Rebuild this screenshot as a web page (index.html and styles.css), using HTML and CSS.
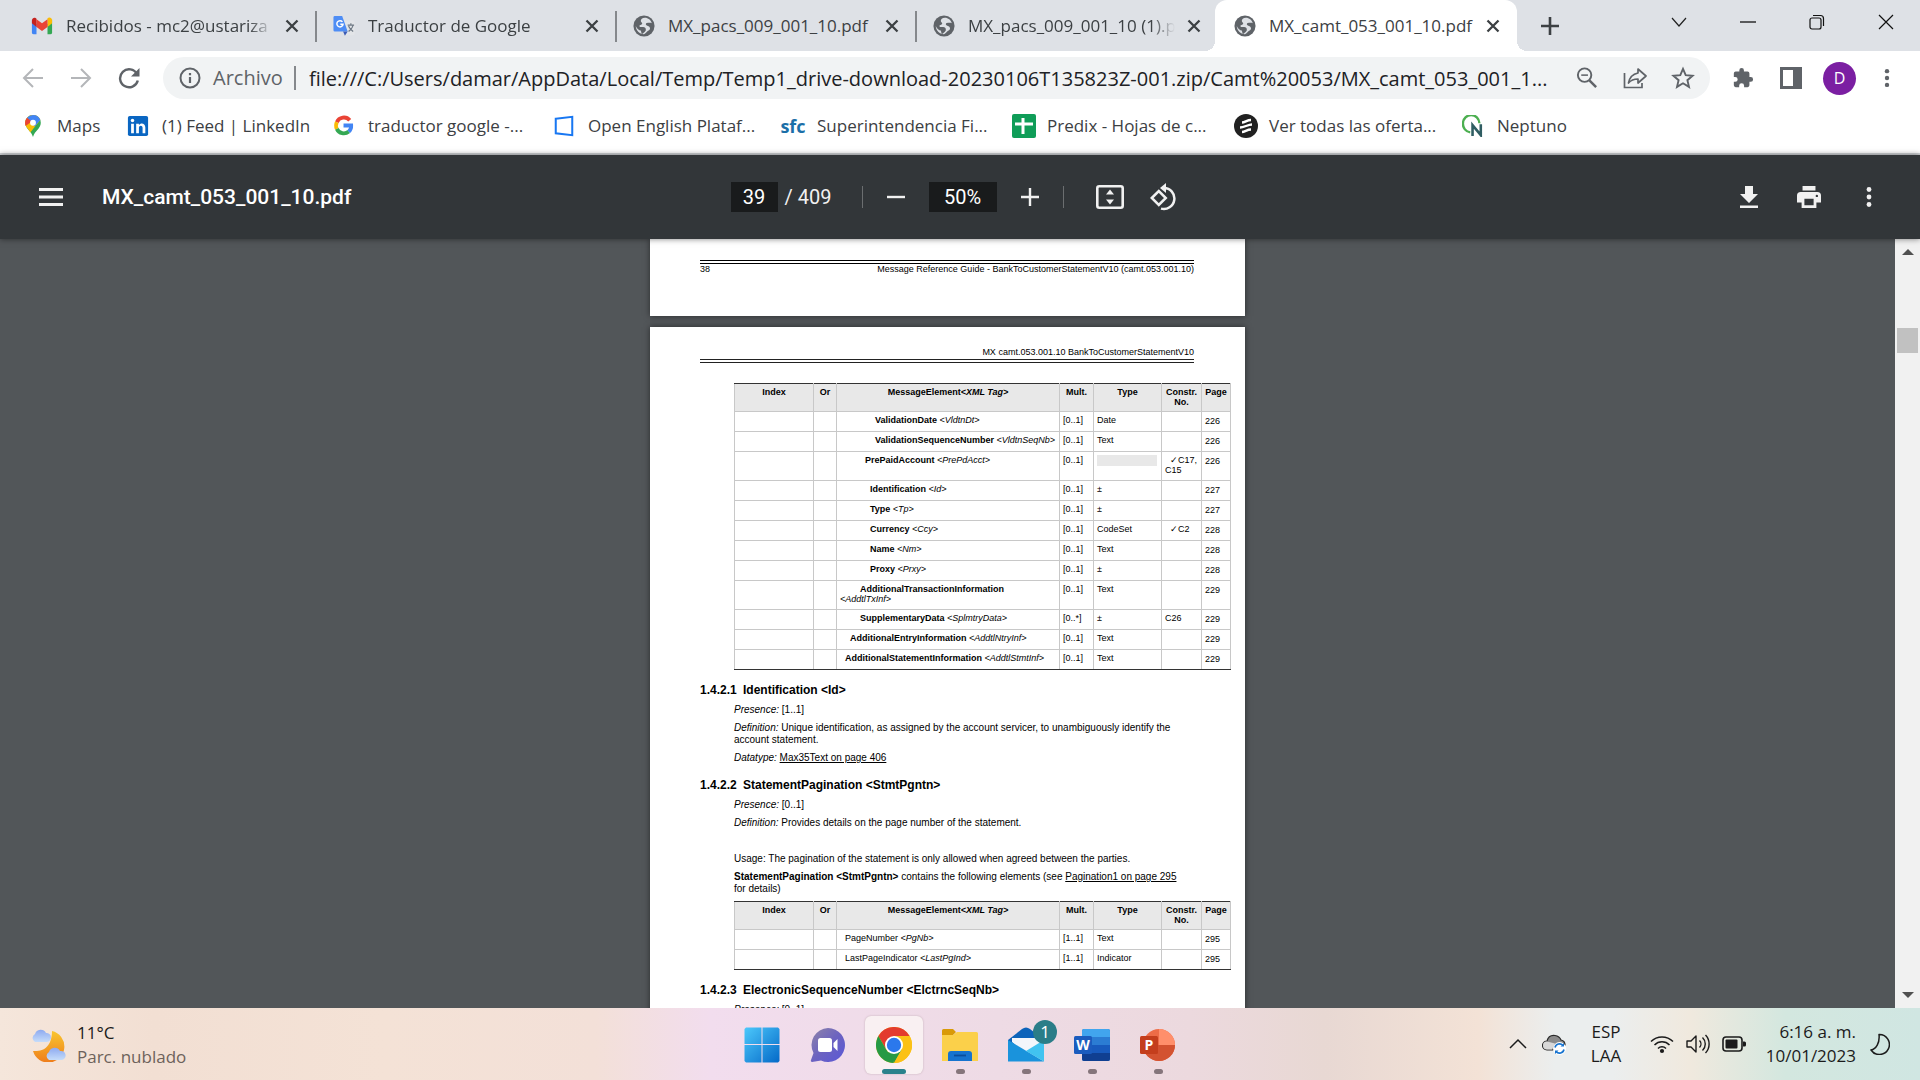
FILE: index.html
```html
<!DOCTYPE html>
<html lang="es">
<head>
<meta charset="utf-8">
<title>MX_camt_053_001_10.pdf</title>
<link rel="stylesheet" href="styles.css">
</head>
<body>
<svg class="defs" aria-hidden="true">
  <symbol id="globe" viewBox="0 0 24 24"><circle cx="12" cy="12" r="11.5" fill="#5f6368"/><path d="M13 3c-3 0-4.500 1.500-4.500 3.500 0 1.500 2 1.500 1.500 3s-3 1-3 2.500 2 1.200 4 1.200 3 1.300 3 2.800-1 2-2 3-1 1.500-2.500 1.500L8.500 17c-2 0-4-2-5.500-5 .3 5 4 9 9 9 2.500-1 3-3 5-4s2-3.500.5-4.500-3.500-1-3.500-2.500 2-1.500 3.500-1.500 2.500 0 3 .5C19.500 5.500 16.500 3 13 3z" fill="#dee1e6"/></symbol>
  <symbol id="x" viewBox="0 0 14 14"><path d="M1.500 1.500l11 11M12.500 1.500l-11 11" stroke="currentColor" stroke-width="2.300"/></symbol>
  <symbol id="dots" viewBox="0 0 6 24"><g fill="currentColor"><circle cx="3" cy="4.500" r="2.400"/><circle cx="3" cy="12" r="2.400"/><circle cx="3" cy="19.500" r="2.400"/></g></symbol>
</svg>

<div class="screen">
<header class="tabs">
  <div class="tab first">
    <svg class="fav" viewBox="0 0 24 24"><path d="M1 5v14a2 2 0 002 2h3V10z" fill="#4285f4"/><path d="M23 5v14a2 2 0 01-2 2h-3V10z" fill="#34a853"/><path d="M18 5.500V13l5-4V6c0-3-3-4-5-2.500z" fill="#fbbc04"/><path d="M6 13V4.500l6 4.500 6-4.500V13l-6 4.500z" fill="#ea4335"/><path d="M1 6v3l5 4V4L5 3.300C3.500 2.200 1 3.500 1 6z" fill="#c5221f"/></svg>
    <span class="tab-title">Recibidos - mc2@ustariza</span><button class="close" aria-label="Cerrar"><svg><use href="#x"/></svg></button>
  </div>
  <div class="tab">
    <svg class="fav" viewBox="0 0 24 24"><path d="M10 6h12a1.500 1.500 0 011.500 1.500v13A1.500 1.500 0 0122 22h-9z" fill="#e3e5e8"/><path d="M2 1h8l6 17H2a1.500 1.500 0 01-1.500-1.500v-14A1.500 1.500 0 012 1z" fill="#4e8df5"/><path d="M11 18h5l-3 4.500z" fill="#3a5bb5"/><path d="M16 11h7M19.500 9v2M22 11c-1 4-3 5-5 7M17 12c1 3 3 4 5 6" stroke="#707a86" stroke-width="1.300" fill="none"/><path d="M10.300 7.500A3.400 3.400 0 1011 10H8" stroke="#fff" stroke-width="1.600" fill="none"/></svg>
    <span class="tab-title">Traductor de Google</span><button class="close" aria-label="Cerrar"><svg><use href="#x"/></svg></button>
  </div>
  <div class="tab">
    <svg class="fav"><use href="#globe"/></svg>
    <span class="tab-title full">MX_pacs_009_001_10.pdf</span><button class="close" aria-label="Cerrar"><svg><use href="#x"/></svg></button>
  </div>
  <div class="tab last">
    <svg class="fav"><use href="#globe"/></svg>
    <span class="tab-title">MX_pacs_009_001_10 (1).pdf</span><button class="close" aria-label="Cerrar"><svg><use href="#x"/></svg></button>
  </div>
  <div class="tab active">
    <svg class="fav"><use href="#globe"/></svg>
    <span class="tab-title full">MX_camt_053_001_10.pdf</span><button class="close" aria-label="Cerrar"><svg><use href="#x"/></svg></button>
  </div>
  <button class="new-tab" aria-label="Nueva pestaña"><svg viewBox="0 0 18 18"><path d="M9 0v18M0 9h18" stroke="#3c4043" stroke-width="2.600"/></svg></button>
  <div class="window-controls">
    <button aria-label="Buscar pestañas"><svg viewBox="0 0 16 16"><path d="M1 4l7 8 7-8" fill="none" stroke="#222" stroke-width="1.200"/></svg></button>
    <button aria-label="Minimizar"><svg viewBox="0 0 16 16"><path d="M0 8h16" stroke="#111" stroke-width="1.300"/></svg></button>
    <button aria-label="Restaurar"><svg viewBox="0 0 16 16"><rect x="1" y="4" width="11" height="11" rx="2" fill="none" stroke="#111" stroke-width="1.200"/><path d="M4 1.500h7.500a3 3 0 013 3V12" fill="none" stroke="#111" stroke-width="1.200"/></svg></button>
    <button aria-label="Cerrar ventana"><svg viewBox="0 0 16 16"><path d="M1 1l14 14M15 1L1 15" stroke="#111" stroke-width="1.200"/></svg></button>
  </div>
</header>

<nav class="toolbar">
  <button class="off" aria-label="Atrás"><svg viewBox="0 0 22 22"><path d="M21 11H2M11 2l-9 9 9 9" fill="none" stroke="currentColor" stroke-width="2"/></svg></button>
  <button class="off" aria-label="Adelante"><svg viewBox="0 0 22 22"><path d="M1 11h19M11 2l9 9-9 9" fill="none" stroke="currentColor" stroke-width="2"/></svg></button>
  <button aria-label="Recargar"><svg viewBox="0 0 22 22"><path d="M19 7a9 9 0 10.800 6.500" fill="none" stroke="currentColor" stroke-width="2.400"/><path d="M21.500 1v8.500H13z" fill="currentColor"/></svg></button>
  <div class="omnibox">
    <svg class="info" viewBox="0 0 22 22"><circle cx="11" cy="11" r="9.500" fill="none" stroke="#5f6368" stroke-width="2"/><path d="M11 10v6M11 6v2.200" stroke="#5f6368" stroke-width="2.200"/></svg>
    <label class="scheme" for="url">Archivo</label>
    <input id="url" class="url" value="file:///C:/Users/damar/AppData/Local/Temp/Temp1_drive-download-20230106T135823Z-001.zip/Camt%20053/MX_camt_053_001_1...">
    <button aria-label="Zoom"><svg viewBox="-1 -1 25 25"><circle cx="9" cy="8.500" r="7" fill="none" stroke="currentColor" stroke-width="2"/><path d="M14 14l7 7" stroke="currentColor" stroke-width="2.600"/><path d="M5.500 8.500h7" stroke="currentColor" stroke-width="1.600"/></svg></button>
    <button aria-label="Compartir"><svg viewBox="0 0 24 24"><path d="M1.500 7v14.500H19V17" fill="none" stroke="currentColor" stroke-width="1.700"/><path d="M15 3l8 7-8 7v-4c-4 0-7 1-9.500 4C6.500 11.500 10 8 15 7z" fill="none" stroke="currentColor" stroke-width="1.700" stroke-linejoin="round"/></svg></button>
    <button aria-label="Favorito"><svg viewBox="0 0 24 24"><path d="M12 2.800l2.700 6.300 6.900.600-5.200 4.500 1.600 6.700-6-3.600-6 3.600 1.600-6.700-5.200-4.500 6.900-.600z" fill="none" stroke="currentColor" stroke-width="1.900"/></svg></button>
  </div>
  <button class="ext" aria-label="Extensiones"><svg viewBox="0 0 24 24"><path d="M20.500 11H19V7a2 2 0 00-2-2h-4V3.500a2.500 2.500 0 00-5 0V5H4a2 2 0 00-2 2v3.800h1.500a2.700 2.700 0 010 5.400H2V20a2 2 0 002 2h3.800v-1.500a2.700 2.700 0 015.400 0V22H17a2 2 0 002-2v-4h1.500a2.500 2.500 0 000-5z" fill="currentColor"/></svg></button>
  <button class="side" aria-label="Panel lateral"><svg viewBox="0 0 22 22"><path d="M0 0h22v22H0zM3 3v16h10V3z" fill="currentColor" fill-rule="evenodd"/></svg></button>
  <button class="avatar" aria-label="Perfil">D</button>
  <button class="menu" aria-label="Menú"><svg><use href="#dots"/></svg></button>
</nav>

<nav class="bookmarks">
  <a href="#"><svg viewBox="0 0 24 24"><path d="M12 0a8.500 8.500 0 00-8.500 8.500C3.500 15 10 17 12 24c2-7 8.500-9 8.500-15.500A8.500 8.500 0 0012 0z" fill="#34a853"/><path d="M12 0a8.500 8.500 0 018 5.500L9 19C7 15 3.500 13 3.500 8.500A8.500 8.500 0 0112 0z" fill="#fbbc04"/><path d="M12 0a8.500 8.500 0 018 5.500l-6 7L5.500 3A8.500 8.500 0 0112 0z" fill="#4285f4"/><path d="M5.500 3l5 4-6.500 5C2.500 8 4 5 5.500 3z" fill="#ea4335"/><circle cx="12" cy="8.500" r="3.200" fill="#fff"/></svg>Maps</a>
  <a href="#"><svg viewBox="0 0 24 24"><rect x="1" y="1" width="22" height="22" rx="2" fill="#0a66c2"/><path d="M4.500 9.500h3V20h-3zM10 9.500h3v1.500c2-3 7-2 7 2.500V20h-3v-6c0-3-4-3-4 0v6h-3z" fill="#fff"/><circle cx="6" cy="6" r="1.900" fill="#fff"/></svg>(1) Feed | LinkedIn</a>
  <a href="#"><svg viewBox="1 1 23 23"><g fill="none" stroke-width="4"><path d="M18.500 6.500A8 8 0 005 8.500" stroke="#ea4335"/><path d="M5 8.500a8 8 0 000 7" stroke="#fbbc04"/><path d="M5 15.500a8 8 0 0012.500 2.800" stroke="#34a853"/><path d="M17.500 18.300A8 8 0 0020 12h-8" stroke="#4285f4"/></g></svg>traductor google -...</a>
  <a href="#"><svg viewBox="0 0 24 24"><path d="M3 4l18-2v20L3 20z" fill="none" stroke="#1877f2" stroke-width="2.200"/></svg>Open English Plataf...</a>
  <a href="#"><span class="sfc">sfc</span>Superintendencia Fi...</a>
  <a href="#"><svg class="big" viewBox="0 0 24 24"><rect width="24" height="24" rx="2" fill="#0f9d58"/><path d="M11 4v16M3 10h18" stroke="#fff" stroke-width="3"/></svg>Predix - Hojas de c...</a>
  <a href="#"><svg class="big" viewBox="0 0 24 24"><circle cx="12" cy="12" r="12" fill="#212121"/><path d="M8 8.500c3 0 5-2.500 9-2.500M6 13.500c4 0 8-3 12-3M8 18c3 0 5-2.500 9-2.500" fill="none" stroke="#fff" stroke-width="2.400"/></svg>Ver todas las oferta...</a>
  <a href="#"><svg viewBox="0 0 24 24"><path d="M9 19A9 9.500 0 1119 9" fill="none" stroke="#4caf50" stroke-width="2.600"/><path d="M11.500 23V11l9 11V10" fill="none" stroke="#2f5d62" stroke-width="2.800"/></svg>Neptuno</a>
</nav>

<section class="pdf-bar">
  <div class="pdf-left">
    <button aria-label="Menú del documento"><svg viewBox="0 0 24 18"><path d="M0 1.500h24M0 9h24M0 16.500h24" stroke="currentColor" stroke-width="3"/></svg></button>
    <h1>MX_camt_053_001_10.pdf</h1>
  </div>
  <div class="pdf-mid">
    <input class="page-no" aria-label="Página" value="39"><span class="total">/ 409</span><i class="sep"></i>
    <button aria-label="Reducir"><svg viewBox="0 0 18 18"><path d="M0 9h18" stroke="currentColor" stroke-width="2.400"/></svg></button>
    <input class="zoom" aria-label="Zoom" value="50%">
    <button aria-label="Ampliar"><svg viewBox="0 0 18 18"><path d="M0 9h18M9 0v18" stroke="currentColor" stroke-width="2.400"/></svg></button>
    <i class="sep"></i>
    <button class="wide fit" aria-label="Ajustar a la página"><svg viewBox="0 0 28 24"><rect x="1.300" y="1.300" width="25.400" height="21.400" rx="2" fill="none" stroke="currentColor" stroke-width="2.600"/><path d="M14 4.500l4 5h-8zM14 19.500l4-5h-8z" fill="currentColor"/></svg></button>
    <button class="wide rot" aria-label="Girar"><svg viewBox="0 0 28 28"><path d="M1.800 15l7-7 7 7-7 7z" fill="none" stroke="currentColor" stroke-width="2.500"/><path d="M14 5a10.500 10.500 0 11-3 20.600" fill="none" stroke="currentColor" stroke-width="2.500"/><path d="M16 0v10l-6-5z" fill="currentColor"/></svg></button>
  </div>
  <div class="pdf-right">
    <button aria-label="Descargar"><svg viewBox="0 0 24 24"><path d="M8 1h8v8h5l-9 9-9-9h5zM3 20.500h18V23H3z" fill="currentColor"/></svg></button>
    <button aria-label="Imprimir"><svg viewBox="0 0 26 24"><path d="M6 0h14v5H6zM4 6.500h18a4 4 0 014 4V18h-5v6H5v-6H0v-7.500a4 4 0 014-4zM8 14v7h10v-7zM21.500 9.500a1.300 1.300 0 100 2.600 1.300 1.300 0 000-2.600z" fill="currentColor" fill-rule="evenodd"/></svg></button>
    <button aria-label="Más acciones"><svg><use href="#dots"/></svg></button>
  </div>
</section>

<main class="viewer">
  <div class="canvas">
    <article class="page prev">
      <footer class="foot"><span>38</span><span>Message Reference Guide - BankToCustomerStatementV10 (camt.053.001.10)</span></footer>
    </article>
    <article class="page">
      <div class="head">MX camt.053.001.10 BankToCustomerStatementV10</div>
      <table>
        <colgroup><col class="c1"><col class="c2"><col class="c3"><col class="c4"><col class="c5"><col class="c6"><col class="c7"></colgroup>
        <thead><tr><th>Index</th><th>Or</th><th>MessageElement<em>&lt;XML Tag&gt;</em></th><th>Mult.</th><th>Type</th><th>Constr. No.</th><th>Page</th></tr></thead>
        <tbody>
          <tr><td></td><td></td><td class="l7"><b>ValidationDate</b> <em>&lt;VldtnDt&gt;</em></td><td>[0..1]</td><td>Date</td><td></td><td>226</td></tr>
          <tr><td></td><td></td><td class="l7"><b>ValidationSequenceNumber</b> <em>&lt;VldtnSeqNb&gt;</em></td><td>[0..1]</td><td>Text</td><td></td><td>226</td></tr>
          <tr><td></td><td></td><td class="l5"><b>PrePaidAccount</b> <em>&lt;PrePdAcct&gt;</em></td><td>[0..1]</td><td><div class="blank"></div></td><td class="l1">✓C17, C15</td><td>226</td></tr>
          <tr><td></td><td></td><td class="l6"><b>Identification</b> <em>&lt;Id&gt;</em></td><td>[0..1]</td><td>±</td><td></td><td>227</td></tr>
          <tr><td></td><td></td><td class="l6"><b>Type</b> <em>&lt;Tp&gt;</em></td><td>[0..1]</td><td>±</td><td></td><td>227</td></tr>
          <tr><td></td><td></td><td class="l6"><b>Currency</b> <em>&lt;Ccy&gt;</em></td><td>[0..1]</td><td>CodeSet</td><td class="l1">✓C2</td><td>228</td></tr>
          <tr><td></td><td></td><td class="l6"><b>Name</b> <em>&lt;Nm&gt;</em></td><td>[0..1]</td><td>Text</td><td></td><td>228</td></tr>
          <tr><td></td><td></td><td class="l6"><b>Proxy</b> <em>&lt;Prxy&gt;</em></td><td>[0..1]</td><td>±</td><td></td><td>228</td></tr>
          <tr><td></td><td></td><td class="l4"><b>AdditionalTransactionInformation</b><br><em>&lt;AddtlTxInf&gt;</em></td><td>[0..1]</td><td>Text</td><td></td><td>229</td></tr>
          <tr><td></td><td></td><td class="l4"><b>SupplementaryData</b> <em>&lt;SplmtryData&gt;</em></td><td>[0..*]</td><td>±</td><td>C26</td><td>229</td></tr>
          <tr><td></td><td></td><td class="l2"><b>AdditionalEntryInformation</b> <em>&lt;AddtlNtryInf&gt;</em></td><td>[0..1]</td><td>Text</td><td></td><td>229</td></tr>
          <tr><td></td><td></td><td class="l1"><b>AdditionalStatementInformation</b> <em>&lt;AddtlStmtInf&gt;</em></td><td>[0..1]</td><td>Text</td><td></td><td>229</td></tr>
        </tbody>
      </table>
      <h2><span>1.4.2.1</span>Identification &lt;Id&gt;</h2>
      <p><em>Presence:</em> [1..1]</p>
      <p><em>Definition:</em> Unique identification, as assigned by the account servicer, to unambiguously identify the account statement.</p>
      <p><em>Datatype:</em> <a href="#">Max35Text on page 406</a></p>
      <h2><span>1.4.2.2</span>StatementPagination &lt;StmtPgntn&gt;</h2>
      <p><em>Presence:</em> [0..1]</p>
      <p class="gap"><em>Definition:</em> Provides details on the page number of the statement.</p>
      <p>Usage: The pagination of the statement is only allowed when agreed between the parties.</p>
      <p><b>StatementPagination &lt;StmtPgntn&gt;</b> contains the following elements (see <a href="#">Pagination1 on page 295</a> for details)</p>
      <table>
        <colgroup><col class="c1"><col class="c2"><col class="c3"><col class="c4"><col class="c5"><col class="c6"><col class="c7"></colgroup>
        <thead><tr><th>Index</th><th>Or</th><th>MessageElement<em>&lt;XML Tag&gt;</em></th><th>Mult.</th><th>Type</th><th>Constr. No.</th><th>Page</th></tr></thead>
        <tbody>
          <tr><td></td><td></td><td class="l1">PageNumber <em>&lt;PgNb&gt;</em></td><td>[1..1]</td><td>Text</td><td></td><td>295</td></tr>
          <tr><td></td><td></td><td class="l1">LastPageIndicator <em>&lt;LastPgInd&gt;</em></td><td>[1..1]</td><td>Indicator</td><td></td><td>295</td></tr>
        </tbody>
      </table>
      <h2><span>1.4.2.3</span>ElectronicSequenceNumber &lt;ElctrncSeqNb&gt;</h2>
      <p><em>Presence:</em> [0..1]</p>
    </article>
  </div>
  <div class="scrollbar">
    <svg viewBox="0 0 12 6"><path d="M0 6l6-6 6 6z" fill="#505050"/></svg>
    <div class="track"><div class="thumb"></div></div>
    <svg viewBox="0 0 12 6"><path d="M0 0l6 6 6-6z" fill="#505050"/></svg>
  </div>
</main>

<footer class="taskbar">
  <div class="weather">
    <svg viewBox="0 0 36 34"><defs><linearGradient id="mo" x1="0" y1="0" x2="0" y2="1"><stop offset="0" stop-color="#f9c62e"/><stop offset="1" stop-color="#ee7d1c"/></linearGradient><linearGradient id="cl" x1="0" y1="0" x2="0" y2="1"><stop offset="0" stop-color="#8eaaf0"/><stop offset="1" stop-color="#c5dcfa"/></linearGradient></defs><path d="M22 3a16 16 0 11-19 20c10 1 19-4 19-20z" fill="url(#mo)"/><path d="M5 14a4.500 4.500 0 010-8 6 6 0 0111-1 4.500 4.500 0 011 9z" fill="url(#cl)"/><path d="M19 32a4.500 4.500 0 010-8 6 6 0 0111-1 4.500 4.500 0 012 9z" fill="url(#cl)"/></svg>
    <div><div>11°C</div><div class="dim">Parc. nublado</div></div>
  </div>
  <div class="apps">
    <button aria-label="Inicio"><svg viewBox="0 0 36 36"><defs><linearGradient id="wi" x1="0" y1="0" x2="1" y2="1"><stop offset="0" stop-color="#4cc8fb"/><stop offset="1" stop-color="#0469c8"/></linearGradient></defs><path d="M2 .500h15.500V17H.500V2zM18.500.500H34L35.500 2v15h-17zM.500 18h17v17.500H2L.500 34zM18.500 18h17v16L34 35.500H18.500z" fill="url(#wi)"/></svg></button>
    <button aria-label="Chat"><svg viewBox="0 0 36 36"><defs><linearGradient id="ch" x1="0" y1="0" x2="1" y2="1"><stop offset="0" stop-color="#8f85a8"/><stop offset=".5" stop-color="#6c63c0"/><stop offset="1" stop-color="#5a57d8"/></linearGradient></defs><path d="M18 1a17 17 0 11-7 32.500L2 35c-1 0-1.500-1-1-2l2.500-7A17 17 0 0118 1z" fill="url(#ch)"/><rect x="8" y="11" width="14" height="14" rx="2.500" fill="#fff"/><path d="M23.500 16l4-4v12l-4-4z" fill="#fff"/></svg></button>
    <button class="on" aria-label="Chrome"><svg viewBox="0 0 36 36"><circle cx="18" cy="18" r="18" fill="#fbc116"/><path d="M2.400 9A18 18 0 0133.600 9H18l-7.800 13.500z" fill="#e33b2e"/><path d="M2.400 9l7.800 13.500A9 9 0 0018 27l-.500 9A18 18 0 012.400 9z" fill="#269a45"/><path d="M18 36l7.800-13.500-6-2L13 25z" fill="#269a45"/><path d="M25.800 22.500L18 36a18 18 0 0015.600-27H18z" fill="#fbc116"/><circle cx="18" cy="18" r="9" fill="#fff"/><circle cx="18" cy="18" r="7.200" fill="#2b78ec"/></svg></button>
    <button class="run" aria-label="Explorador"><svg viewBox="0 0 36 36"><path d="M0 3.500A1.500 1.500 0 011.500 2H11l3 3-3 3H0z" fill="#d99a08"/><path d="M0 8h11l4-3h19.500A1.500 1.500 0 0136 6.500V34H0z" fill="#fbd04a"/><path d="M6 34v-7a3 3 0 013-3h18a3 3 0 013 3v7z" fill="#1673cf"/><path d="M12 28.500h12" stroke="#0a4d9c" stroke-width="1.800"/></svg></button>
    <button class="run" aria-label="Correo"><svg viewBox="0 0 36 36"><path d="M0 13L14 2q4-3 8 0l14 11v8H0z" fill="#0c63ba"/><path d="M4 11h29v8L18 27 4 15z" fill="#f3f6fb"/><path d="M0 13l36 21.500H0z" fill="#1a93dc"/><path d="M36 13v21.500L18 24z" fill="#41c3f0"/></svg><span class="badge">1</span></button>
    <button class="run" aria-label="Word"><svg viewBox="0 0 36 36"><rect x="8" y="2" width="28" height="32" rx="2" fill="#2b7cd3"/><path d="M8 10V4a2 2 0 012-2h24a2 2 0 012 2v6z" fill="#41a5ee"/><path d="M8 18h28v8H8z" fill="#185abd"/><path d="M8 26h28v6a2 2 0 01-2 2H10a2 2 0 01-2-2z" fill="#103f91"/><rect y="9" width="18" height="18" rx="1.500" fill="#1b5cbe"/><text x="9" y="23" class="glyph">W</text></svg></button>
    <button class="run" aria-label="PowerPoint"><svg viewBox="0 0 36 36"><circle cx="19" cy="18" r="16" fill="#ed6c47"/><path d="M19 2a16 16 0 0116 16H19z" fill="#ff8f6b"/><path d="M3 18h32a16 16 0 01-32 0z" fill="#d35230"/><rect y="9" width="18" height="18" rx="1.500" fill="#c43e1c"/><text x="9" y="23" class="glyph">P</text></svg></button>
  </div>
  <div class="tray">
    <svg class="t-chev" viewBox="0 0 18 18"><path d="M1 13l8-8 8 8" fill="none" stroke="#1b1b1b" stroke-width="1.500"/></svg>
    <svg class="t-ico" viewBox="0 0 24 24"><path d="M5 18a4.500 4.500 0 010-9c1-4 4-6 8-5.500 3 .500 5 2 6 4.500a5 5 0 014 5h-7l-5 5z" fill="#8b8b8b" stroke="#2a2a2a" stroke-width="1.200"/><path d="M5 17.500a4 4 0 010-8l8 2-3 6z" fill="#d8d8d8"/><circle cx="17.500" cy="16.500" r="6.500" fill="#fff"/><path d="M13 15.500a4.600 4.600 0 018-2M22 17.500a4.600 4.600 0 01-8 2" fill="none" stroke="#1673cf" stroke-width="1.600"/><path d="M22 11v3.500h-3.500zM13 22v-3.500h3.500z" fill="#1673cf"/></svg>
    <div class="lang">ESP<br>LAA</div>
    <svg class="t-ico" viewBox="0 0 24 24"><g fill="none" stroke="#1b1b1b" stroke-width="1.500"><path d="M1 9.500a15.500 15.500 0 0122 0M4.500 13a10.500 10.500 0 0115 0M8 16.500a5.700 5.700 0 018 0"/></g><circle cx="12" cy="19" r="2.100" fill="#1b1b1b"/></svg>
    <svg class="t-ico snd" viewBox="0 0 24 24"><path d="M1 9h4l5-5v16l-5-5H1zM13.500 8.500a5 5 0 010 7M16.500 5.500a9 9 0 010 13M19.500 3a13 13 0 010 18" fill="none" stroke="#1b1b1b" stroke-width="1.400" stroke-linejoin="round"/></svg>
    <svg class="t-ico bat" viewBox="0 0 24 24"><rect x="1" y="5" width="19" height="14" rx="3" fill="none" stroke="#1b1b1b" stroke-width="1.600"/><rect x="3.500" y="7.500" width="12" height="9" rx="1" fill="#1b1b1b"/><path d="M21 9.500h1.500a1.500 1.500 0 011.500 1.500v2a1.500 1.500 0 01-1.500 1.500H21z" fill="#1b1b1b"/></svg>
    <div class="clock">6:16 a. m.<br>10/01/2023</div>
    <svg class="t-moon" viewBox="0 0 20 22"><path d="M9 1.500A10 10 0 111 17c5-1 9-7 8-15.500z" fill="none" stroke="#1b1b1b" stroke-width="1.500" stroke-linejoin="round"/></svg>
  </div>
</footer>
</div>
</body>
</html>
```
FILE: styles.css
```css
* { box-sizing: border-box; }
html, body { height: 100%; margin: 0; }
body { font-family: "Open Sans", "Noto Sans", sans-serif; color: #3c4043; }
button { border: 0; padding: 0; background: none; color: inherit; font: inherit; display: flex; align-items: center; justify-content: center; flex: none; }
input { border: 0; padding: 0; min-width: 0; font: inherit; color: inherit; background: none; outline: 0; }
svg { flex: none; display: block; }
.defs { display: none; }
.screen { height: 100vh; display: flex; flex-direction: column; overflow: hidden; }

/* Tab strip */
.tabs { flex: none; display: flex; height: 51px; padding-left: 15px; background: #dee1e6; }
.tab { flex: none; width: 300px; display: flex; align-items: center; padding: 0 16px; border-right: 2px solid; border-image: linear-gradient(transparent 12px, #85888c 12px, #85888c 41px, transparent 41px) 1; }
.tab.first { width: 302px; }
.tab.last { width: 298px; padding-right: 14px; border: 0; }
.tab.active { position: relative; width: 302px; background: #fff; border-radius: 12px 12px 0 0; border: 0; padding: 0 17px 0 19px; }
.tab.active::before, .tab.active::after { content: ""; position: absolute; bottom: 0; width: 10px; height: 10px; }
.tab.active::before { right: 100%; background: radial-gradient(circle at 0 0, transparent 10px, #fff 10px); }
.tab.active::after { left: 100%; background: radial-gradient(circle at 100% 0, transparent 10px, #fff 10px); }
.fav { width: 22px; height: 22px; margin-right: 13px; }
.tab-title { flex: 1; min-width: 0; overflow: hidden; white-space: nowrap; font-size: 17px; line-height: 26px; -webkit-mask-image: linear-gradient(to left, transparent, #000 24px); mask-image: linear-gradient(to left, transparent, #000 24px); }
.tab-title.full { overflow: visible; -webkit-mask-image: none; mask-image: none; }
.close { width: 14px; height: 14px; margin-left: 12px; }
.close svg { width: 14px; height: 14px; }
.new-tab { width: 66px; }
.new-tab svg { width: 18px; height: 18px; }
.window-controls { margin-left: auto; display: flex; height: 44px; }
.window-controls button { width: 69px; }
.window-controls svg { width: 16px; height: 16px; }

/* Address bar */
.toolbar { flex: none; display: flex; align-items: center; height: 54px; padding: 0 10px 0 9px; background: #fff; color: #5f6368; }
.toolbar > button { width: 48px; height: 42px; }
.toolbar > button svg { width: 22px; height: 22px; }
.toolbar .off { color: #b4b6b9; }
.omnibox { flex: 1; min-width: 0; display: flex; align-items: center; height: 42px; margin-left: 10px; padding: 0 3px 0 16px; border-radius: 21px; background: #f1f3f4; }
.info { width: 22px; height: 22px; }
.scheme { margin-left: 12px; width: 83px; border-right: 2px solid #85888c; line-height: 24px; font-size: 20px; }
.url { flex: 1; margin-left: 13px; font-size: 20px; color: #202124; }
.omnibox button { width: 48px; }
.omnibox button svg { width: 24px; height: 24px; }
.toolbar > .ext { margin-left: 9px; }
.toolbar > .avatar { width: 33px; height: 33px; margin: 0 8px; border-radius: 50%; background: #7b1fa2; color: #fff; font-size: 16px; }
.toolbar > .menu { width: 46px; }

/* Bookmarks */
.bookmarks { flex: none; display: grid; grid-template-columns: 105px 206px 220px 229px 230px 222px 228px 1fr; align-items: center; height: 50px; padding: 0 22px 6px; background: #fff; border-bottom: 2px solid #d5d8db; }
.bookmarks a { display: flex; align-items: center; gap: 13px; white-space: nowrap; font-size: 17px; line-height: 24px; color: #3c4043; text-decoration: none; }
.bookmarks svg { width: 22px; height: 22px; }
.bookmarks .big { width: 24px; height: 24px; margin-right: -2px; }
.sfc { width: 22px; font: bold 18px/22px "Open Sans", sans-serif; color: #1b6fa8; display: flex; justify-content: center; }

/* Viewer toolbar */
.pdf-bar { position: relative; z-index: 1; flex: none; display: grid; grid-template-columns: 1fr auto 1fr; align-items: center; height: 84px; padding: 0 36px 0 37px; background: #323639; color: #f1f1f1; font-family: Roboto, sans-serif; font-size: 20px; box-shadow: 0 0 6px rgba(0, 0, 0, .5); }
.pdf-left, .pdf-mid, .pdf-right { display: flex; align-items: center; }
.pdf-left button { width: 28px; }
.pdf-left svg { width: 24px; height: 18px; }
.pdf-left h1 { margin: 0 0 0 37px; font-size: 21px; line-height: 24px; font-weight: 500; color: #fff; }
.pdf-mid input { height: 30px; background: #191b1c; text-align: center; color: #fff; }
.page-no { width: 47px; }
.zoom { width: 68px; margin: 0 10px; }
.total { width: 67px; margin-left: 7px; }
.sep { width: 1px; height: 22px; margin: 0 10px; background: #6b6e70; }
.pdf-mid button { width: 46px; }
.pdf-mid button svg { width: 18px; height: 18px; }
.pdf-mid .wide { width: 54px; }
.pdf-mid .fit { margin-left: 9px; }
.pdf-mid .wide svg { width: 28px; height: 24px; }
.pdf-mid .rot svg { height: 28px; }
.pdf-right { justify-content: flex-end; }
.pdf-right button { width: 60px; }
.pdf-right button:last-child { width: 30px; margin-left: 15px; }
.pdf-right svg { width: 24px; height: 24px; }

/* Document */
.viewer { flex: 1; min-height: 0; display: flex; background: #525659; }
.canvas { flex: 1; overflow: hidden; display: flex; flex-direction: column; align-items: center; gap: 11px; }
.page { flex: none; width: 595px; padding: 20px 51px 40px 50px; background: #fff; color: #000; font: 10px/12px "Liberation Sans", Arial, sans-serif; box-shadow: 0 0 6px rgba(0, 0, 0, .5); }
.page.prev { padding: 21px 51px 42px 50px; }
.foot { display: flex; justify-content: space-between; border-top: 4px double #000; font-size: 9px; line-height: 10px; }
.head { margin-bottom: 20px; padding-bottom: 2px; border-bottom: 4px double #222; text-align: right; font-size: 9px; line-height: 10px; }
.page p { margin: 0 0 6px 34px; padding-right: 10px; }
.page p.gap { margin-bottom: 24px; }
.page h2 { margin: 14px 0 6px; font-size: 12px; line-height: 15px; }
.page table + h2 { margin-top: 13px; }
.page h2 span { display: inline-block; width: 43px; }
.page p a { color: #000; }
.page table { table-layout: fixed; width: 496px; margin-left: 34px; border-collapse: collapse; font-size: 9px; line-height: 10px; }
.c1 { width: 79px; } .c2 { width: 23px; } .c3 { width: 223px; } .c4 { width: 34px; } .c5 { width: 68px; } .c6 { width: 40px; } .c7 { width: 29px; }
.page th, .page td { padding: 3px 0 5px 3px; border: 1px solid #c8c8c8; height: 20px; vertical-align: top; text-align: left; }
.page th { padding: 3px 0 4px; border-top-color: #333; background: #e8e8e8; text-align: center; }
.page td:last-child { padding-top: 4px; padding-bottom: 4px; }
.page tr:last-child td { border-bottom-color: #333; }
.page .l1 { text-indent: 5px; } .page .l2 { text-indent: 10px; } .page .l4 { text-indent: 20px; }
.page .l5 { text-indent: 25px; } .page .l6 { text-indent: 30px; } .page .l7 { text-indent: 35px; }
.blank { width: 60px; height: 11px; background: #e8e8e8; }

.scrollbar { flex: none; width: 25px; display: flex; flex-direction: column; align-items: center; padding: 10px 0; background: #f1f1f1; }
.scrollbar svg { width: 12px; height: 6px; }
.track { flex: 1; width: 21px; padding-top: 73px; }
.thumb { height: 25px; background: #c1c1c1; }

/* Taskbar */
.taskbar { position: relative; z-index: 1; flex: none; display: grid; grid-template-columns: 1fr auto 1fr; height: 72px; background: linear-gradient(90deg, #f5e6db, #f2dfd3 8%, #f4e2d6 20%, #f3e0d8 31%, #f2ddee 37%, #eedbe5 52%, #ecd9de 62%, #e8d8d3 69%, #f3e2d6 77%, #ebeeee 81%, #ebeeee 84%, #f0e9de 88%, #d3e7df 93%, #d0e6e2); font-size: 17px; line-height: 24px; color: #1b1b1b; }
.weather { display: flex; align-items: center; gap: 11px; padding: 2px 0 0 30px; }
.weather svg { width: 36px; height: 34px; }
.dim { color: #6d625b; }
.apps { display: flex; gap: 8px; padding-top: 8px; }
.apps button { position: relative; width: 58px; height: 58px; border-radius: 6px; }
.apps svg { width: 36px; height: 36px; }
.apps .on { background: #f9f0f2; box-shadow: 0 0 2px #bfaab2; }
.apps .on::after, .apps .run::after { content: ""; position: absolute; bottom: 0; width: 9px; height: 5px; border-radius: 3px; background: #85757b; }
.apps .on::after { width: 24px; background: #2a828c; }
.badge { position: absolute; top: 4px; right: -2px; width: 24px; height: 24px; border-radius: 50%; background: #2a7d88; color: #fff; text-align: center; font-size: 17px; line-height: 24px; }
.glyph { font: bold 14px "Open Sans", sans-serif; fill: #fff; text-anchor: middle; }
.tray { display: flex; align-items: center; justify-content: flex-end; padding: 0 30px 0 0; }
.t-chev { width: 18px; height: 18px; margin-right: 15px; }
.t-ico { width: 24px; height: 24px; }
.lang { width: 80px; margin-right: 4px; text-align: center; }
.snd, .bat { margin-left: 12px; }
.clock { width: 110px; text-align: right; }
.t-moon { width: 20px; height: 22px; margin-left: 14px; }
```
